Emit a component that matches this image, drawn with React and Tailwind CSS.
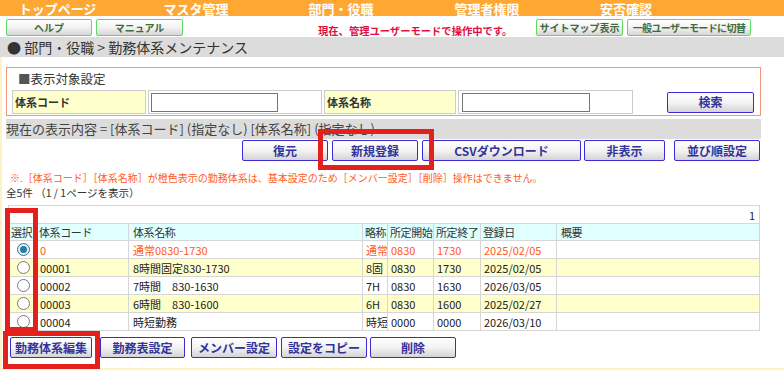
import React from "react";

const Btn = ({ className = "", children }) => (
  <div
    className={`h-[21px] flex items-center justify-center border border-[#3b2bd6] rounded-[2px] bg-linear-to-b from-white via-[#f3f3f3] to-[#d4d4d4] text-[12px] font-bold text-[#33339a] leading-none shrink-0 ${className}`}
  >
    {children}
  </div>
);

const GBtn = ({ className = "", children }) => (
  <div
    className={`h-[17px] flex items-center justify-center border border-[#5cdc5c] rounded-[2px] bg-linear-to-b from-white via-[#f2f2f2] to-[#d6d6d6] text-[10px] font-bold text-[#3d6b3d] leading-none shrink-0 ${className}`}
  >
    {children}
  </div>
);

const Radio = ({ checked }) =>
  checked ? (
    <div className="w-[13px] h-[13px] rounded-full border border-[#2f6f8c] bg-[#e6f1f5] flex items-center justify-center mx-auto">
      <div className="w-[7px] h-[7px] rounded-full bg-[#2f7a99]" />
    </div>
  ) : (
    <div className="w-[13px] h-[13px] rounded-full border border-[#7a7a7a] bg-white mx-auto" />
  );

const rows = [
  { code: "0", name: "通常0830-1730", abbr: "通常", s: "0830", e: "1730", d: "2025/02/05", orange: true, checked: true, yellow: false },
  { code: "00001", name: "8時間固定830-1730", abbr: "8固", s: "0830", e: "1730", d: "2025/02/05", yellow: true },
  { code: "00002", name: "7時間　830-1630", abbr: "7H", s: "0830", e: "1630", d: "2026/03/05", yellow: false },
  { code: "00003", name: "6時間　830-1600", abbr: "6H", s: "0830", e: "1600", d: "2025/02/27", yellow: true },
  { code: "00004", name: "時短勤務", abbr: "時短", s: "0000", e: "0000", d: "2026/03/10", yellow: false },
];

export default function App() {
  const td = "border border-[#d6d6d6] pl-[3px] whitespace-nowrap overflow-hidden";
  const th = "border border-[#d6d6d6] pl-[2px] whitespace-nowrap overflow-hidden tracking-[-0.4px]";
  return (
    <div className="relative w-[784px] h-[370px] overflow-hidden bg-white text-[#222] font-['Noto_Sans_CJK_JP','Noto_Sans',sans-serif]">
      {/* top menu */}
      <div className="h-[16px] bg-[#ffa733] flex items-center text-white font-bold text-[13px]">
        <div className="w-[115px] text-center leading-[15px]">トップページ</div>
        <div className="w-[162px] text-center leading-[15px]">マスタ管理</div>
        <div className="w-[128px] text-center leading-[15px]">部門・役職</div>
        <div className="w-[164px] text-center leading-[15px]">管理者権限</div>
        <div className="w-[114px] text-center leading-[15px]">安否確認</div>
      </div>

      {/* second row */}
      <div className="h-[21px] flex items-start">
        <GBtn className="w-[86px] ml-[6px] mt-[3px]">ヘルプ</GBtn>
        <GBtn className="w-[87px] ml-[4px] mt-[3px]">マニュアル</GBtn>
        <div className="ml-[135px] mt-[9px] text-[10.3px] leading-[12px] font-bold text-[#dd1040]">
          現在、管理ユーザーモードで操作中です。
        </div>
        <div className="flex-1" />
        <GBtn className="w-[87px] mt-[3px]">サイトマップ表示</GBtn>
        <GBtn className="w-[124px] ml-[4px] mr-[33px] mt-[3px] tracking-[-0.6px]">一般ユーザーモードに切替</GBtn>
      </div>

      {/* title bar */}
      <div className="h-[20px] bg-[#dcdcdc] pl-[7px] text-[14px] leading-[20px] text-[#333]">
        ● 部門・役職 &gt; 勤務体系メンテナンス
      </div>

      {/* content */}
      <div className="h-[313px] border-l-2 border-b-2 border-[#fff3c6] pl-[4px] pt-[10px]">
        {/* search panel */}
        <div className="w-[755px] h-[49px] border border-[#f0967c]">
          <div className="h-[22px] pl-[11px] text-[12.5px] leading-[22px] text-[#333]">
            <span className="text-[#555]">■</span>表示対象設定
          </div>
          <div className="h-[24px] flex items-center pl-[5px]">
            <div className="w-[134px] h-[24px] border border-[#cccccc] bg-[#ffffcc] pl-[2px] text-[11px] font-bold leading-[22px] text-[#333]">
              体系コード
            </div>
            <div className="w-[174px] h-[24px] ml-[2px] border border-[#cccccc] pl-[2px] flex items-center">
              <div className="w-[127px] h-[19px] border border-[#767676] bg-white" />
            </div>
            <div className="w-[132px] h-[24px] ml-[2px] border border-[#cccccc] bg-[#ffffcc] pl-[2px] text-[11px] font-bold leading-[22px] text-[#333]">
              体系名称
            </div>
            <div className="w-[175px] h-[24px] ml-[2px] border border-[#cccccc] pl-[3px] flex items-center">
              <div className="w-[128px] h-[19px] border border-[#767676] bg-white" />
            </div>
            <Btn className="w-[87px] ml-[34px]">検索</Btn>
          </div>
        </div>

        {/* current display */}
        <div className="w-[755px] h-[20px] mt-[3px] bg-[#dcdcdc] text-[13px] leading-[20px] text-[#444] whitespace-nowrap">
          現在の表示内容 = [体系コード] (指定なし) [体系名称] (指定なし)
        </div>

        {/* action buttons */}
        <div className="w-[755px] flex justify-end pr-[1px] mt-[1px]">
          <Btn className="w-[86px]">復元</Btn>
          <Btn className="w-[86px] ml-[4px]">新規登録</Btn>
          <Btn className="w-[159px] ml-[4px]">CSVダウンロード</Btn>
          <Btn className="w-[81px] ml-[3px]">非表示</Btn>
          <Btn className="w-[86px] ml-[9px]">並び順設定</Btn>
        </div>

        <div className="mt-[11px] pl-[4px] h-[12px] text-[10px] leading-[12px] text-[#ff5a24] whitespace-nowrap">
          ※.［体系コード］［体系名称］が橙色表示の勤務体系は、基本設定のため［メンバー設定］［削除］操作はできません。
        </div>
        <div className="mt-[3px] h-[12px] text-[10.5px] leading-[12px] text-[#333] whitespace-nowrap">
          全5件 （1 / 1ページを表示）
        </div>

        {/* table */}
        <table className="mt-[6px] ml-[2px] w-[751px] table-fixed border-collapse text-[11px] leading-[16px]">
          <colgroup>
            <col className="w-[28px]" />
            <col className="w-[92px]" />
            <col className="w-[234px]" />
            <col className="w-[25px]" />
            <col className="w-[46px]" />
            <col className="w-[47px]" />
            <col className="w-[76px]" />
            <col className="w-[203px]" />
          </colgroup>
          <tbody>
            <tr className="h-[18px]">
              <td colSpan={8} className="border border-[#d6d6d6] text-right pr-[4px] text-[#222]">
                1
              </td>
            </tr>
            <tr className="h-[17px] bg-[#e0ffff] text-[#333]">
              <td className={th}>選択</td>
              <td className={th}>体系コード</td>
              <td className={`${th} pl-[4px]`}>体系名称</td>
              <td className={`${th} pl-[1px]`}>略称</td>
              <td className={th}>所定開始</td>
              <td className={th}>所定終了</td>
              <td className={th}>登録日</td>
              <td className={`${th} pl-[4px]`}>概要</td>
            </tr>
            {rows.map((r, i) => (
              <tr
                key={i}
                className={`h-[18px] ${r.yellow ? "bg-[#ffffcc]" : "bg-white"} ${r.orange ? "text-[#ff5a24]" : "text-[#222]"}`}
              >
                <td className="border border-[#d6d6d6] pl-[1px]">
                  <Radio checked={r.checked} />
                </td>
                <td className={td}>{r.code}</td>
                <td className={`${td} pl-[4px]`}>{r.name}</td>
                <td className={`${td} pl-[1px]`}>{r.abbr}</td>
                <td className={td}>{r.s}</td>
                <td className={td}>{r.e}</td>
                <td className={td}>{r.d}</td>
                <td className={td}></td>
              </tr>
            ))}
          </tbody>
        </table>

        {/* bottom buttons */}
        <div className="flex mt-[6px] pl-[4px]">
          <Btn className="w-[82px]">勤務体系編集</Btn>
          <Btn className="w-[85px] ml-[8px]">勤務表設定</Btn>
          <Btn className="w-[86px] ml-[6px]">メンバー設定</Btn>
          <Btn className="w-[86px] ml-[4px]">設定をコピー</Btn>
          <Btn className="w-[86px] ml-[3px]">削除</Btn>
        </div>
      </div>

      {/* red annotation boxes */}
      <div className="absolute left-[318px] top-[129px] w-[116px] h-[41px] border-[5px] border-[#e3201b]" />
      <div className="absolute left-[5px] top-[208px] w-[33px] h-[124px] border-[5px] border-[#e3201b]" />
      <div className="absolute left-[3px] top-[331px] w-[97px] h-[38px] border-[5px] border-[#e3201b]" />
    </div>
  );
}
